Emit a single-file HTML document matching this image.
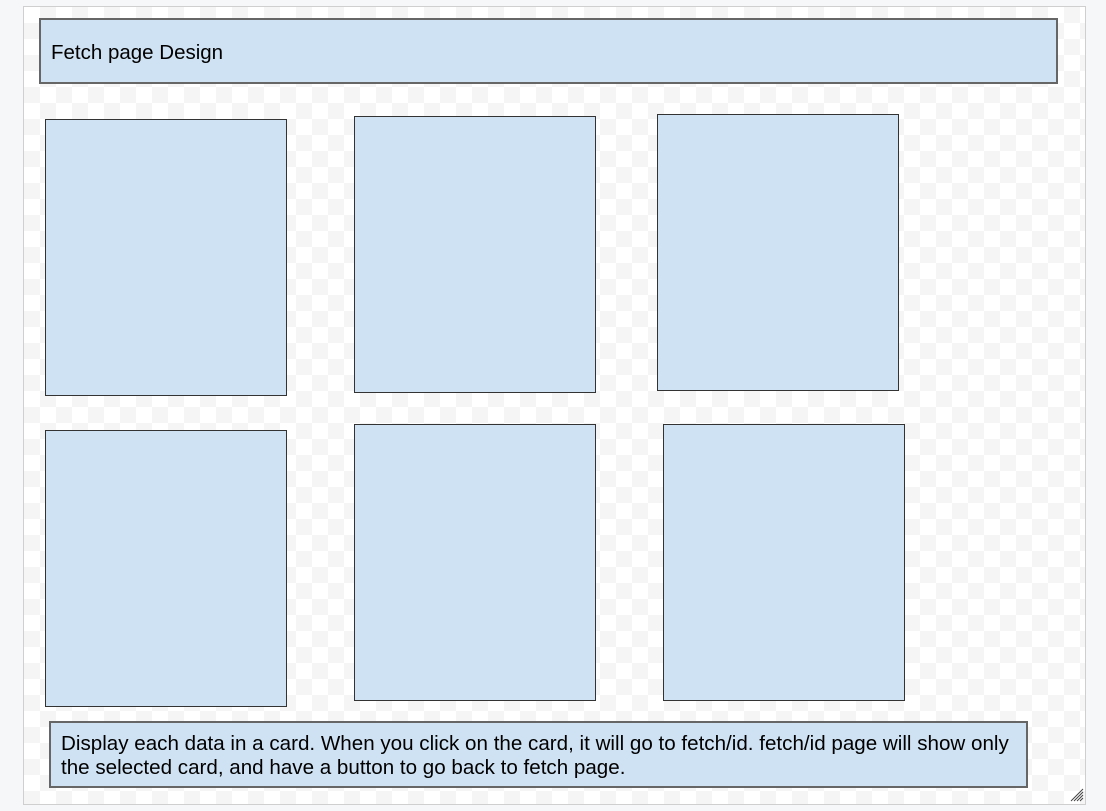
<!DOCTYPE html>
<html><head><style>
body{margin:0;width:1106px;height:811px;background:#f6f7f9;position:relative;overflow:hidden;font-family:"Liberation Sans",sans-serif;}
.frame{position:absolute;left:23px;top:6px;width:1061px;height:797px;border:1px solid #cfcfcf;
background-color:#fff;background-image:linear-gradient(45deg,#f5f5f5 25%,transparent 25%,transparent 75%,#f5f5f5 75%),linear-gradient(45deg,#f5f5f5 25%,transparent 25%,transparent 75%,#f5f5f5 75%);background-size:32px 32px;background-position:0 0,16px 16px;}
.b{position:absolute;background:#cfe2f3;border:1px solid #333;box-sizing:border-box;}
.t{position:absolute;background:#cfe2f3;border:2px solid #666;box-sizing:border-box;color:#000;white-space:nowrap;}
</style></head><body>
<div class="frame"></div>
<div class="t" style="left:39px;top:18px;width:1019px;height:66px;font-size:20.5px;line-height:24px;padding:21px 0 0 10px;">Fetch page Design</div>
<div class="b" style="left:45px;top:119px;width:242px;height:277px"></div>
<div class="b" style="left:354px;top:116px;width:242px;height:277px"></div>
<div class="b" style="left:657px;top:114px;width:242px;height:277px"></div>
<div class="b" style="left:45px;top:430px;width:242px;height:277px"></div>
<div class="b" style="left:354px;top:424px;width:242px;height:277px"></div>
<div class="b" style="left:663px;top:424px;width:242px;height:277px"></div>
<div class="t" style="left:49px;top:721px;width:979px;height:67px;font-size:20.6px;line-height:24px;padding:9px 0 0 10px;">Display each data in a card. When you click on the card, it will go to fetch/id. fetch/id page will show only<br>the selected card, and have a button to go back to fetch page.</div>
<svg style="position:absolute;left:1070px;top:788px" width="14" height="14"><path d="M13 1L1 13M13 4L4 13M13 7L7 13M13 10L10 13" stroke="#444" stroke-width="1"/></svg>
</body></html>
